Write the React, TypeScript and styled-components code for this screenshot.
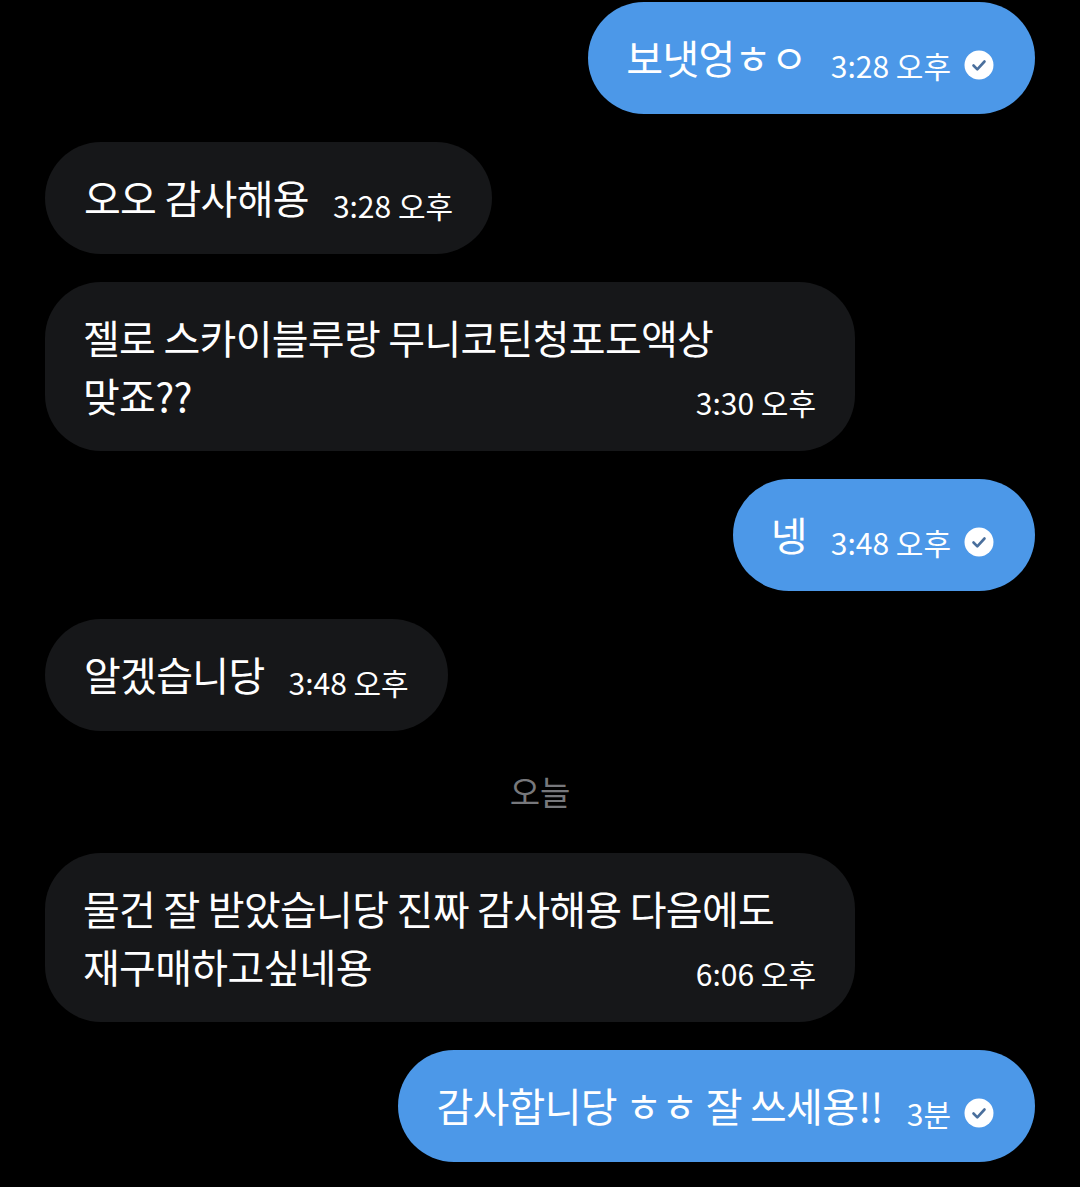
import React from 'react'
import styled, { createGlobalStyle } from 'styled-components'

const Global = createGlobalStyle`
  html, body { margin: 0; padding: 0; background: #000; }
  body { font-family: "Noto Sans CJK KR", "Noto Sans", sans-serif; }
`

const Thread = styled.div`
  width: 1080px;
  height: 1187px;
  overflow: hidden;
  background: #000;
  box-sizing: border-box;
  padding: 2px 45px 0;
  display: flex;
  flex-direction: column;
  gap: 28px;
`

const Row = styled.div<{ $mine?: boolean }>`
  display: flex;
  justify-content: ${(p) => (p.$mine ? 'flex-end' : 'flex-start')};
`

const Bubble = styled.div<{ $mine?: boolean }>`
  box-sizing: border-box;
  background: ${(p) => (p.$mine ? '#4c98e8' : '#161719')};
  color: #fff;
  border-radius: 56px;
  height: 112px;
  padding: 0 ${(p) => (p.$mine ? '41px 0 38px' : '39px 0 39px')};
  display: flex;
  align-items: center;
  gap: 24px;
`

const WideBubble = styled.div`
  box-sizing: border-box;
  background: #161719;
  color: #fff;
  border-radius: 56px;
  width: 810px;
  height: 169px;
  padding: 26px 39px 0 38px;
`

const Text = styled.div`
  font-size: 40px;
  line-height: 58px;
  white-space: nowrap;
  letter-spacing: -0.7px;
  padding-bottom: 3px;
`

const WideText = styled(Text)`
  padding-bottom: 0;
`

const Meta = styled.div`
  display: flex;
  align-items: center;
  gap: 13px;
  font-size: 30px;
  line-height: 40px;
  white-space: nowrap;
  padding-top: 14px;
`

const WideMeta = styled(Meta)`
  justify-content: flex-end;
  padding-top: 0;
  margin-top: -42px;
`

const Day = styled.div`
  text-align: center;
  color: #77787c;
  font-size: 33px;
  line-height: 48px;
  padding: 8px 0 10px;
`

const Check = () => (
  <svg width="30" height="30" viewBox="0 0 30 30">
    <circle cx="15" cy="15" r="14.5" fill="#fff" />
    <path d="M9.5 15.5l3.8 3.8L20.5 11.5" fill="none" stroke="#4a6f9c" strokeWidth="2.6" strokeLinecap="round" strokeLinejoin="round" />
  </svg>
)

export default function App() {
  return (
    <>
      <Global />
      <Thread>
        <Row $mine>
          <Bubble $mine>
            <Text>보냇엉ㅎㅇ</Text>
            <Meta>3:28 오후 <Check /></Meta>
          </Bubble>
        </Row>
        <Row>
          <Bubble>
            <Text>오오 감사해용</Text>
            <Meta>3:28 오후</Meta>
          </Bubble>
        </Row>
        <Row>
          <WideBubble>
            <WideText>젤로 스카이블루랑 무니코틴청포도액상<br />맞죠??</WideText>
            <WideMeta>3:30 오후</WideMeta>
          </WideBubble>
        </Row>
        <Row $mine>
          <Bubble $mine>
            <Text>넹</Text>
            <Meta>3:48 오후 <Check /></Meta>
          </Bubble>
        </Row>
        <Row>
          <Bubble>
            <Text>알겠습니당</Text>
            <Meta>3:48 오후</Meta>
          </Bubble>
        </Row>
        <Day>오늘</Day>
        <Row>
          <WideBubble>
            <WideText>물건 잘 받았습니당 진짜 감사해용 다음에도<br />재구매하고싶네용</WideText>
            <WideMeta>6:06 오후</WideMeta>
          </WideBubble>
        </Row>
        <Row $mine>
          <Bubble $mine>
            <Text>감사합니당 ㅎㅎ 잘 쓰세용!!</Text>
            <Meta>3분 <Check /></Meta>
          </Bubble>
        </Row>
      </Thread>
    </>
  )
}
